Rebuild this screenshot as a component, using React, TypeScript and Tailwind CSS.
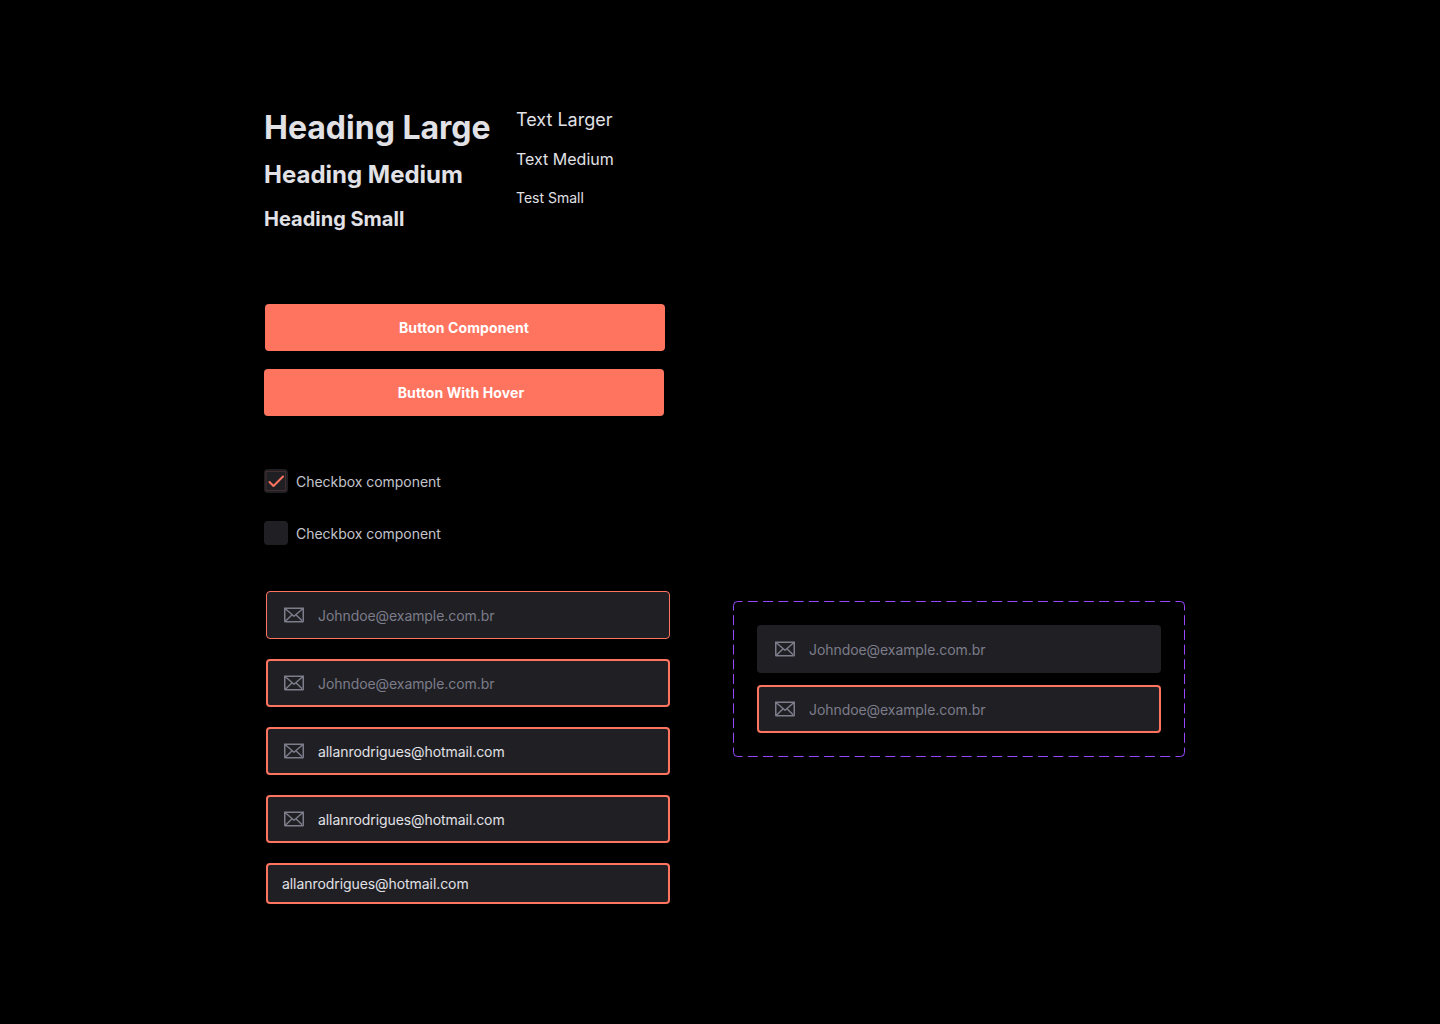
function Mail() {
  return (
    <svg width="20" height="16" viewBox="0 0 20 16" fill="none" stroke="#7C7C8A" strokeWidth="1.5" strokeLinecap="round" strokeLinejoin="round" className="-mt-0.5 shrink-0">
      <path d="M.75 1.25H19.25V14.25Q19.25 14.75 18.75 14.75H1.25Q.75 14.75 .75 14.25ZM19.25 1.25L10 9.2L.75 1.25M8.1 7.8L1.1 14.5M18.9 14.5L11.9 7.8" />
    </svg>
  );
}

function Field({ value, filled = false, frame }: { value: string; filled?: boolean; frame: string }) {
  return (
    <div className={`flex h-12 w-[404px] items-center gap-3.5 rounded bg-[#202024] pt-px text-sm tracking-[-0.07px] ${frame}`}>
      <Mail />
      <span className={filled ? "text-[#E1E1E6]" : "text-[#7C7C8A]"}>{value}</span>
    </div>
  );
}

const thick = "border-2 border-[#FF745F] pl-4";

export default function App() {
  return (
    <main className="flex h-[1024px] w-[1440px] bg-black pl-[264px] font-['Inter',sans-serif] text-[#E1E1E6]">
      <div className="flex w-[469px] flex-col pt-[108px]">
        <div className="flex h-[196px]">
          <div className="w-[252px] font-bold whitespace-nowrap">
            <h1 className="h-[52px] text-[32px] leading-[39px]">Heading Large</h1>
            <h2 className="h-[47px] text-2xl leading-[30px]">Heading Medium</h2>
            <h3 className="text-xl leading-6">Heading Small</h3>
          </div>
          <div className="whitespace-nowrap">
            <p className="h-[39px] text-lg leading-6">Text Larger</p>
            <p className="h-[41px] text-base leading-6">Text Medium</p>
            <p className="text-sm leading-5">Test Small</p>
          </div>
        </div>
        <button className="ml-px h-[47px] w-[400px] rounded bg-[#FF745F] pr-0.5 text-sm font-bold tracking-[0.11px] text-white">Button Component</button>
        <button className="mt-[18px] h-[47px] w-[400px] rounded bg-[#FF745F] pr-1.5 text-sm font-bold tracking-[0.11px] text-white">Button With Hover</button>
        <div className="mt-[53px] flex h-6 items-center gap-2 text-sm tracking-[-0.04px] text-[#C4C4CC]">
          <span className="flex size-6 items-center justify-center rounded bg-[#202024]">
            <svg width="24" height="24" viewBox="0 0 24 24" fill="none" stroke="#FF745F" strokeLinecap="round" strokeLinejoin="round"><path d="M2.5 2.5H21.5V21.5H2.5Z" strokeOpacity=".16" strokeWidth="1" /><path d="M19 7.5L9.5 17L5.5 13" strokeWidth="2" /></svg>
          </span>
          <span className="pt-0.5">Checkbox component</span>
        </div>
        <div className="mt-7 flex h-6 items-center gap-2 text-sm tracking-[-0.04px] text-[#C4C4CC]">
          <span className="size-6 rounded bg-[#202024]" />
          <span className="pt-0.5">Checkbox component</span>
        </div>
        <div className="mt-[46px] ml-0.5 flex flex-col gap-5">
          <Field value="Johndoe@example.com.br" frame="border border-[#FF745F] pl-[17px]" />
          <Field value="Johndoe@example.com.br" frame={thick} />
          <Field value="allanrodrigues@hotmail.com" filled frame={thick} />
          <Field value="allanrodrigues@hotmail.com" filled frame={thick} />
          <div className="flex h-[41px] w-[404px] items-center rounded border-2 border-[#FF745F] bg-[#202024] pl-3.5 text-sm tracking-[-0.07px]">allanrodrigues@hotmail.com</div>
        </div>
      </div>
      <div className="relative mt-[601px] flex h-[156px] w-[452px] flex-col gap-3 p-6">
        <svg className="absolute inset-0" width="452" height="156" fill="none" stroke="#9747FF">
          <path d="M4.5 .5H447.5M4.5 155.5H447.5" strokeDasharray="10 5.276" strokeDashoffset="5" />
          <path d="M.5 4.5V151.5M451.5 4.5V151.5" strokeDasharray="10 4.7" strokeDashoffset="5" />
          <path d="M.5 4.5A4 4 0 0 1 4.5 .5M447.5 .5A4 4 0 0 1 451.5 4.5M451.5 151.5A4 4 0 0 1 447.5 155.5M4.5 155.5A4 4 0 0 1 .5 151.5" />
        </svg>
        <Field value="Johndoe@example.com.br" frame="pl-[18px]" />
        <Field value="Johndoe@example.com.br" frame={thick} />
      </div>
    </main>
  );
}
